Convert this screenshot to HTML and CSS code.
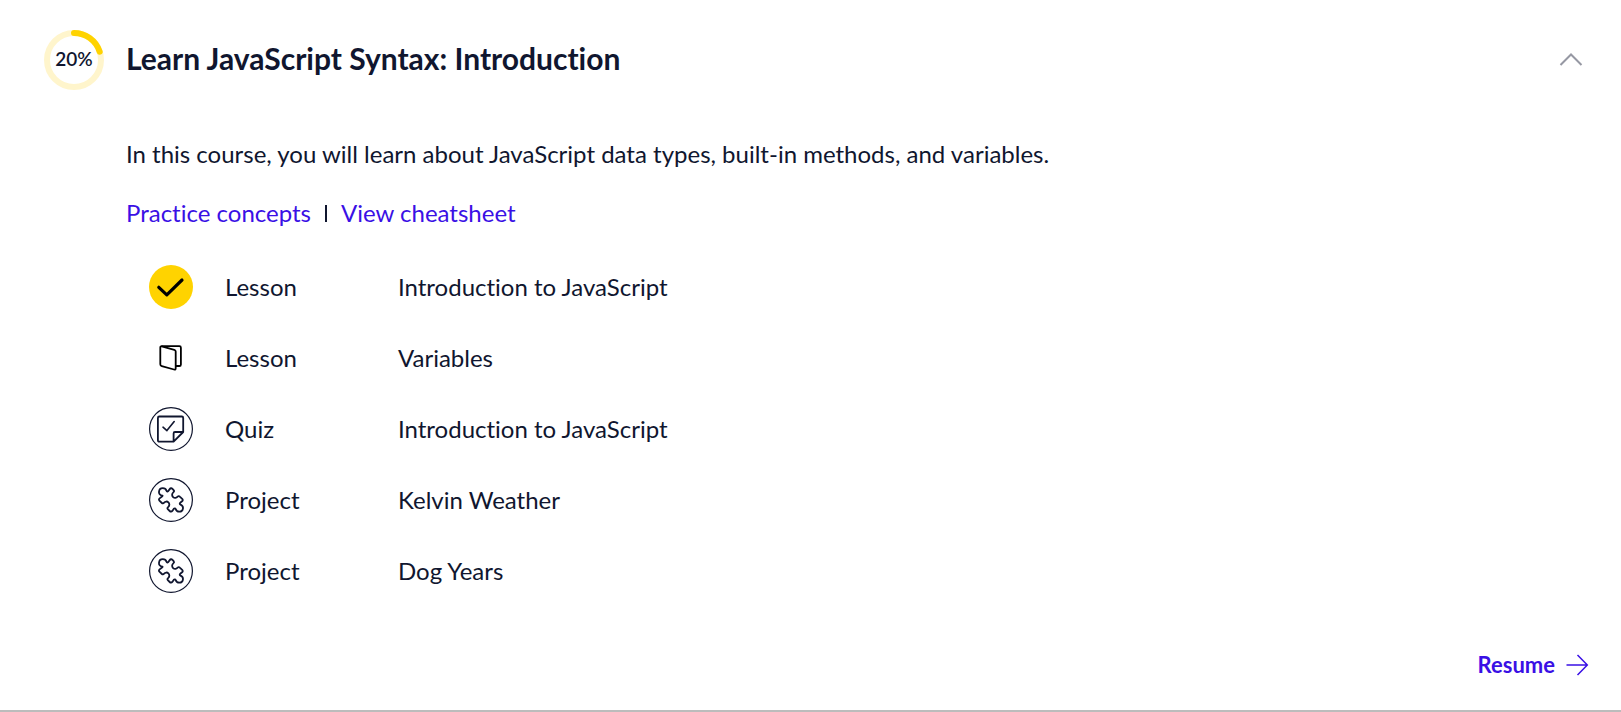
FILE: index.html
```html
<!DOCTYPE html>
<html lang="en">
<head>
<meta charset="utf-8">
<meta name="viewport" content="width=device-width, initial-scale=1">
<title>Learn JavaScript Syntax: Introduction</title>
<link rel="stylesheet" href="styles.css">
</head>
<body>
<svg class="symbols" aria-hidden="true">
  <symbol id="puzzle" viewBox="0 0 44 44">
    <circle cx="22" cy="22" r="21.4" fill="none" stroke="currentColor" stroke-width="1.2"/>
    <path transform="translate(9.2 9.4)" fill="none" stroke="currentColor" stroke-width="1.8" stroke-linejoin="round" d="M4.4 8.2C1.6 8.2.6 6 .8 4.4C1 2.200 2.600.8 4.600.8C6.800.8 8 2.400 8.300 3.400C8.600 4.500 9.800 4.200 10.300 3.300L11.500 1.700C12.300.6 13.400.6 14.300 1.500L15.600 2.900C16.200 3.700 15.800 4.400 15.100 5C13.500 6.400 13.600 8.500 14.900 9.700C16.300 11 18.100 10.800 19.400 9.300C20.200 8.500 20.900 8.500 21.600 9.200L24 11.400C24.800 12.200 24.700 13.300 23.900 13.900L22.300 15.100C21.200 16 21.300 16.800 22.300 17.200C24 17.900 24.900 19 24.800 20.700C24.600 22.900 23.100 24.300 21.100 24.300C19.100 24.300 17.900 23 17.500 21.600C17.200 20.700 16.100 20.700 15.500 21.500L14.100 23.500C13.400 24.400 12.300 24.400 11.500 23.600L9.600 21.700C8.900 21 9.200 20.300 9.900 19.700C11.500 18.300 11.500 16.200 10.200 14.900C8.900 13.700 7 13.900 5.700 15.400C5.100 16.200 4.400 16.300 3.700 15.600L1.200 13.200C.5 12.500.6 11.600 1.400 11L3.200 9.700C4.100 9.100 4.500 8.700 4.400 8.200Z"/>
  </symbol>
</svg>
<main class="module">
  <header class="module-header">
    <div class="progress">
      <svg class="progress-ring" viewBox="0 0 60 60" aria-hidden="true">
        <circle class="ring-track" cx="30" cy="30" r="27"/>
        <circle class="ring-value" cx="30" cy="30" r="27" pathLength="100" stroke-dasharray="20 80" transform="rotate(-90 30 30)"/>
      </svg>
      <span class="progress-label">20%</span>
    </div>
    <h1 class="module-title">Learn JavaScript Syntax: Introduction</h1>
    <button class="toggle" type="button" aria-label="Collapse" aria-expanded="true">
      <svg width="24" height="14" viewBox="0 0 24 14" aria-hidden="true"><path d="M1.500 12 12 1.500 22.500 12"/></svg>
    </button>
  </header>

  <div class="module-body">
    <p class="description">In this course, you will learn about JavaScript data types, built-in methods, and variables.</p>
    <nav class="resources">
      <a href="#practice">Practice concepts</a>
      <span class="divider"></span>
      <a href="#cheatsheet">View cheatsheet</a>
    </nav>
    <ul class="items">
      <li><a class="item" href="#intro">
        <svg class="item-icon" viewBox="0 0 44 44" aria-hidden="true"><circle cx="22" cy="22" r="22" fill="#ffd300"/><path d="M9.800 22.300 17.800 29.800 33 15" fill="none" stroke="#000" stroke-width="3.200" stroke-linecap="round" stroke-linejoin="round"/></svg>
        <span class="kind">Lesson</span><span>Introduction to JavaScript</span></a></li>
      <li><a class="item" href="#variables">
        <svg class="item-icon" viewBox="0 0 44 44" aria-hidden="true"><g fill="none" stroke="#000" stroke-width="1.800" stroke-linejoin="round"><path d="M12.700 10.400 25.300 13.800Q26.700 14.200 26.700 15.600V32.200Q26.700 34 25 33.500L12.800 30.200Q11.300 29.800 11.300 28.300V11.500Q11.300 10 12.700 10.400Z"/><path d="M12.300 10.200H30.400Q31.900 10.200 31.900 11.700V28.400Q31.900 30 30.400 30H27"/></g></svg>
        <span class="kind">Lesson</span><span>Variables</span></a></li>
      <li><a class="item" href="#quiz">
        <svg class="item-icon" viewBox="0 0 44 44" aria-hidden="true"><g fill="none" stroke="currentColor" stroke-linejoin="round"><circle cx="22" cy="22" r="21.400" stroke-width="1.200"/><path stroke-width="1.800" d="M10.300 9.500H32.800Q34.200 9.500 34.200 10.900V25L24.600 34.600H10.300Q8.900 34.600 8.900 33.200V10.900Q8.900 9.500 10.300 9.500ZM24.600 34.200V26.400Q24.600 25 26 25H34"/><path stroke-width="1.600" stroke-linecap="round" d="M14 20.200 17.900 23.600 25.200 14.600"/></g></svg>
        <span class="kind">Quiz</span><span>Introduction to JavaScript</span></a></li>
      <li><a class="item" href="#kelvin">
        <svg class="item-icon" aria-hidden="true"><use href="#puzzle"/></svg>
        <span class="kind">Project</span><span>Kelvin Weather</span></a></li>
      <li><a class="item" href="#dog-years">
        <svg class="item-icon" aria-hidden="true"><use href="#puzzle"/></svg>
        <span class="kind">Project</span><span>Dog Years</span></a></li>
    </ul>
  </div>

  <footer class="module-footer">
    <a class="resume" href="#resume">Resume
      <svg width="24" height="24" viewBox="0 0 24 24" aria-hidden="true"><path d="M1.500 12H22M12.500 2 22.300 12 12.500 22"/></svg>
    </a>
  </footer>
</main>
</body>
</html>
```
FILE: styles.css
```css
* {
  box-sizing: border-box;
}

body {
  margin: 0;
  background: #fff;
  color: #10162f;
  font-family: Lato, "Open Sans", sans-serif;
  font-size: 24px;
  font-variant-ligatures: none;
  line-height: 32px;
}

a {
  color: #3a10e5;
  text-decoration: none;
}

.symbols {
  position: absolute;
  width: 0;
  height: 0;
}

.module {
  min-height: 100vh;
  display: flex;
  flex-direction: column;
  padding: 30px 32px 0 44px;
  border-bottom: 2px solid #bcbcbc;
}

.module-header {
  display: flex;
  align-items: center;
  gap: 22px;
}

.progress {
  display: grid;
  place-items: center;
}

.progress-ring,
.progress-label {
  grid-area: 1 / 1;
}

.progress-ring {
  width: 60px;
  height: 60px;
}

.ring-track,
.ring-value {
  fill: none;
  stroke-width: 6;
}

.ring-track {
  stroke: #fff5cc;
}

.ring-value {
  stroke: #ffd300;
  stroke-linecap: round;
}

.progress-label {
  padding-bottom: 2px;
  font-size: 19px;
  font-weight: 600;
  line-height: 24px;
}

.module-title {
  flex: 1;
  margin: 0;
  padding-bottom: 4px;
  font-size: 30px;
  font-weight: 700;
  line-height: 36px;
}

.toggle {
  display: flex;
  padding: 6px;
  border: 0;
  background: none;
}

.toggle path {
  fill: none;
  stroke: #9698a3;
  stroke-width: 2;
}

.module-body {
  padding: 48px 0 0 82px;
}

.description {
  margin: 0;
}

.resources {
  display: flex;
  align-items: center;
  gap: 14px;
  margin-top: 27px;
}

.divider {
  width: 2px;
  height: 17px;
  background: #10162f;
}

.items {
  display: grid;
  gap: 27px;
  margin: 36px 0 0;
  padding: 0 0 0 23px;
  list-style: none;
}

.item {
  display: flex;
  align-items: center;
  color: #10162f;
}

.item-icon {
  width: 44px;
  height: 44px;
  margin-right: 32px;
}

.kind {
  width: 173px;
}

.module-footer {
  display: flex;
  justify-content: flex-end;
  margin-top: auto;
  padding-bottom: 29px;
}

.resume {
  display: flex;
  align-items: center;
  gap: 10px;
  font-size: 22px;
  font-weight: 700;
}

.resume path {
  fill: none;
  stroke: #3a10e5;
  stroke-width: 1.5;
}
```
